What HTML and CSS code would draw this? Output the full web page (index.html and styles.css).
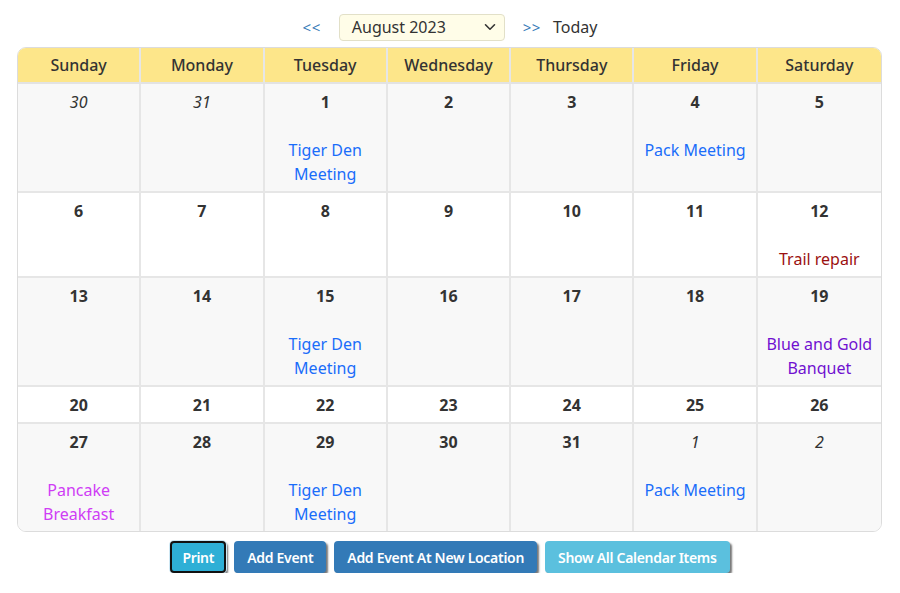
FILE: index.html
```html
<!DOCTYPE html>
<html>
<head>
<meta charset="utf-8">
<link rel="stylesheet" href="styles.css">
</head>
<body>
<div class="nav">
  <a class="arrow prev">&lt;&lt;</a>
  <div class="select">
    <span>August 2023</span>
    <svg width="12" height="8" viewBox="0 0 12 8"><path d="M1.5 1.8 L6 6.2 L10.5 1.8" fill="none" stroke="#333" stroke-width="1.6" stroke-linecap="round" stroke-linejoin="round"/></svg>
  </div>
  <a class="arrow next">&gt;&gt;</a>
  <span class="today">Today</span>
</div>
<div class="cal">
  <table>
    <thead>
      <tr><th>Sunday</th><th>Monday</th><th>Tuesday</th><th>Wednesday</th><th>Thursday</th><th>Friday</th><th>Saturday</th></tr>
    </thead>
    <tbody>
      <tr class="odd">
        <td><span class="other">30</span></td>
        <td><span class="other">31</span></td>
        <td><span class="d">1</span><br><br><span class="ev blue">Tiger Den Meeting</span></td>
        <td><span class="d">2</span></td>
        <td><span class="d">3</span></td>
        <td><span class="d">4</span><br><br><span class="ev blue">Pack Meeting</span></td>
        <td><span class="d">5</span></td>
      </tr>
      <tr>
        <td><span class="d">6</span></td>
        <td><span class="d">7</span></td>
        <td><span class="d">8</span></td>
        <td><span class="d">9</span></td>
        <td><span class="d">10</span></td>
        <td><span class="d">11</span></td>
        <td><span class="d">12</span><br><br><span class="ev red">Trail repair</span></td>
      </tr>
      <tr class="odd">
        <td><span class="d">13</span></td>
        <td><span class="d">14</span></td>
        <td><span class="d">15</span><br><br><span class="ev blue">Tiger Den Meeting</span></td>
        <td><span class="d">16</span></td>
        <td><span class="d">17</span></td>
        <td><span class="d">18</span></td>
        <td><span class="d">19</span><br><br><span class="ev purple">Blue and Gold Banquet</span></td>
      </tr>
      <tr>
        <td><span class="d">20</span></td>
        <td><span class="d">21</span></td>
        <td><span class="d">22</span></td>
        <td><span class="d">23</span></td>
        <td><span class="d">24</span></td>
        <td><span class="d">25</span></td>
        <td><span class="d">26</span></td>
      </tr>
      <tr class="odd last">
        <td><span class="d">27</span><br><br><span class="ev magenta">Pancake Breakfast</span></td>
        <td><span class="d">28</span></td>
        <td><span class="d">29</span><br><br><span class="ev blue">Tiger Den Meeting</span></td>
        <td><span class="d">30</span></td>
        <td><span class="d">31</span></td>
        <td><span class="other">1</span><br><br><span class="ev blue">Pack Meeting</span></td>
        <td><span class="other">2</span></td>
      </tr>
    </tbody>
  </table>
</div>
<div class="buttons">
  <button class="btn info focus">Print</button>
  <button class="btn primary">Add Event</button>
  <button class="btn primary">Add Event At New Location</button>
  <button class="btn light">Show All Calendar Items</button>
</div>
</body>
</html>
```

FILE: styles.css
```css
html, body {
  margin: 0;
  padding: 0;
  background: #fff;
}
body {
  font-family: "Noto Sans", "Open Sans", sans-serif;
  color: #333;
  font-size: 16px;
  padding: 13px 17px 0 17px;
}
.nav {
  display: flex;
  justify-content: center;
  align-items: center;
  height: 28px;
}
.arrow {
  color: #337ab7;
  font-size: 15px;
  letter-spacing: 0.5px;
}
.prev {
  margin-right: 18px;
}
.next {
  margin: 0 12px 0 18px;
}
.select {
  width: 166px;
  height: 27px;
  box-sizing: border-box;
  border: 1px solid #e2e0c8;
  border-radius: 4px;
  background: #fffde8;
  display: flex;
  align-items: center;
  justify-content: space-between;
  padding: 0 8px 0 12px;
  font-size: 16px;
  color: #333;
}
.today {
  font-size: 16px;
  color: #333;
}
.cal {
  margin-top: 6px;
  width: 865px;
  border: 1px solid #dcdcdc;
  border-radius: 9px;
  overflow: hidden;
  box-sizing: border-box;
}
table {
  width: 100%;
  border-collapse: separate;
  border-spacing: 0;
  table-layout: fixed;
}
th {
  background: #fde68a;
  font-weight: 500;
  font-size: 16px;
  color: #333;
  height: 34px;
  padding: 0;
  border-right: 2px solid #e6e6e6;
  border-bottom: 2px solid #e3e3e3;
  text-align: center;
}
td {
  text-align: center;
  vertical-align: top;
  line-height: 24px;
  padding: 6px 4px 5px 4px;
  border-right: 2px solid #e6e6e6;
  border-bottom: 2px solid #e6e6e6;
  background: #fff;
}
th:last-child, td:last-child {
  border-right: none;
}
tr.last td {
  border-bottom: none;
}
tr.odd td {
  background: #f8f8f8;
}
.d {
  font-weight: 700;
  color: #333;
}
.other {
  font-style: italic;
  color: #333;
}
.ev {
  font-size: 16px;
}
.blue { color: #1a6dfa; }
.red { color: #9b1111; }
.purple { color: #7010d0; }
.magenta { color: #cf3df5; }
.buttons {
  display: flex;
  justify-content: center;
  gap: 8px;
  margin-top: 9px;
}
.btn {
  font-family: "Noto Sans", sans-serif;
  font-size: 14px;
  font-weight: 600;
  color: #fff;
  border: 1px solid transparent;
  border-radius: 4px;
  height: 32px;
  padding: 0 12px;
  box-shadow: 2px 2px 2px #777;
  letter-spacing: -0.3px;
}
.info {
  background: #2eafd6;
}
.focus {
  border: 2px solid #111;
  box-shadow: 0 0 0 1px #cfe8f4, 2px 2px 2px #777;
  padding: 0 10px;
}
.primary {
  background: #337ab7;
}
.light {
  background: #5bc0de;
}
```
